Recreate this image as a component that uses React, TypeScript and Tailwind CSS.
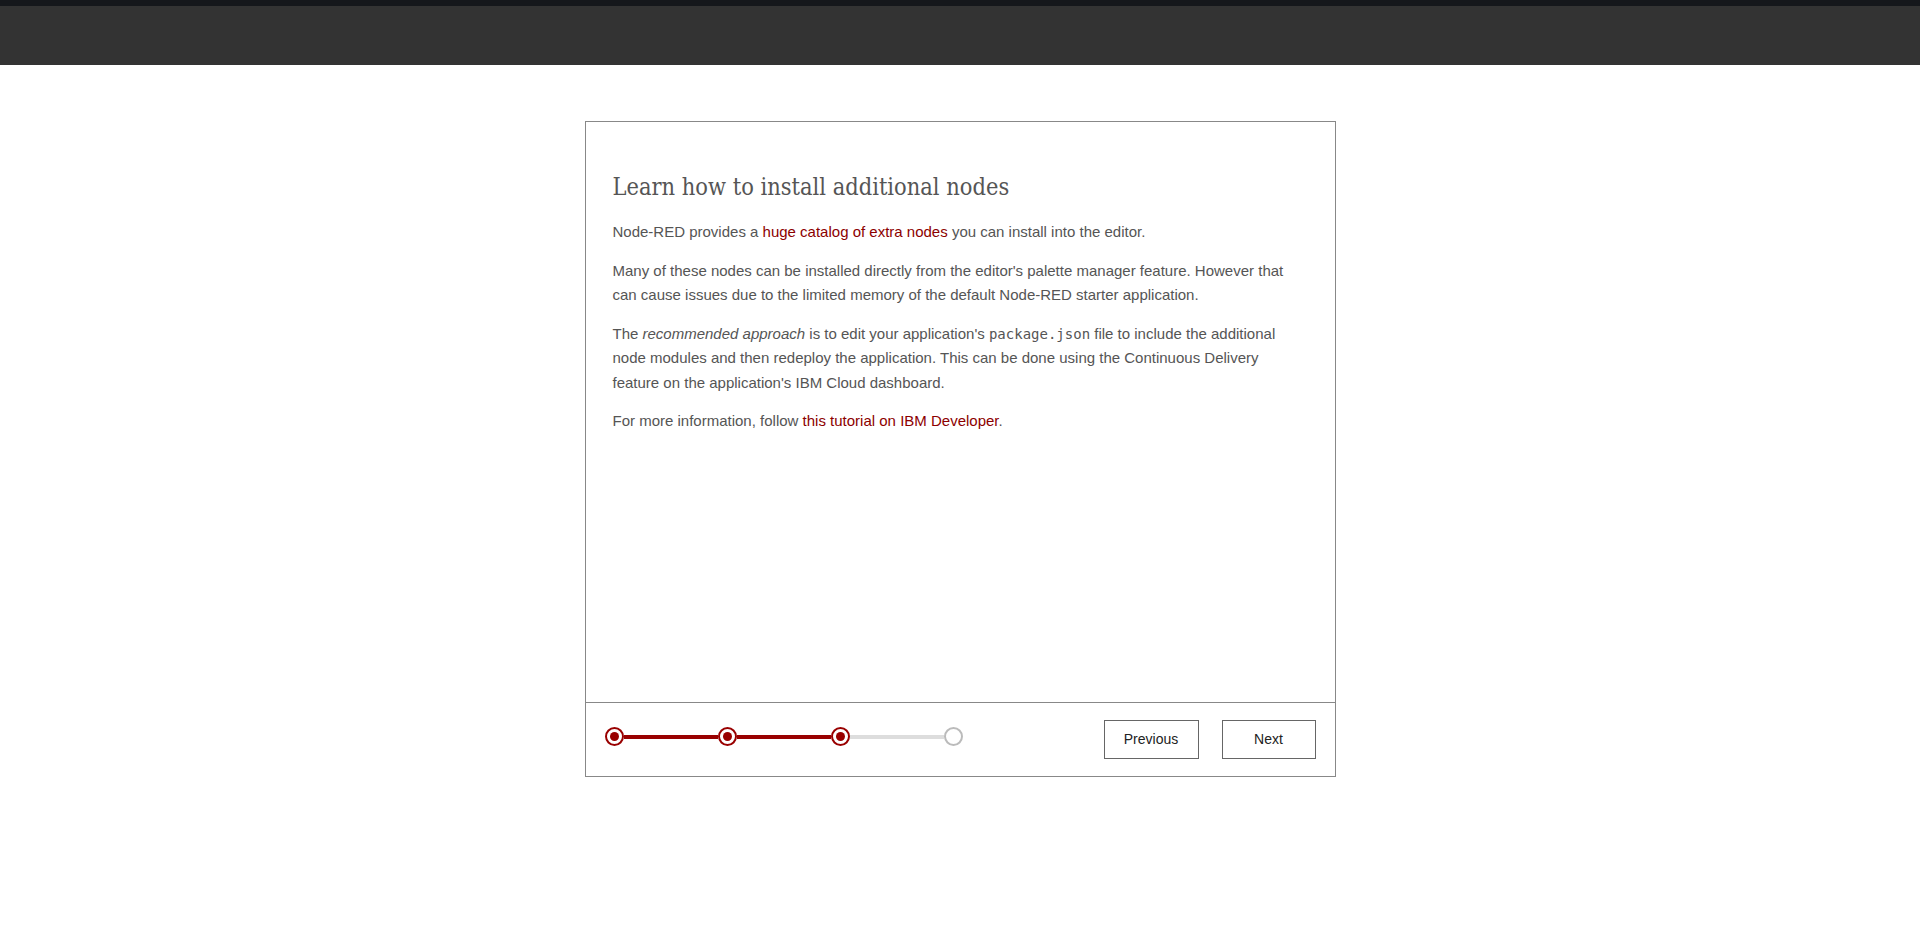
import React from "react";

const steps = [true, true, true, false];

function Stepper() {
  return (
    <div className="flex items-center">
      {steps.map((done, i) => (
        <React.Fragment key={i}>
          {i > 0 && (
            <div className={`h-[4px] w-[94px] ${steps[i - 1] && done ? "bg-[#990000]" : "bg-[#dddddd]"}`} />
          )}
          {done ? (
            <div className="flex h-[19px] w-[19px] items-center justify-center rounded-full border-[2px] border-[#990000] bg-white">
              <div className="h-[9px] w-[9px] rounded-full bg-[#990000]" />
            </div>
          ) : (
            <div className="h-[19px] w-[19px] rounded-full border-[2px] border-[#bbbbbb] bg-white" />
          )}
        </React.Fragment>
      ))}
    </div>
  );
}

export default function App() {
  const link = "text-[#8c0000] no-underline";
  return (
    <div className="min-h-screen bg-white font-['Liberation_Sans',Arial,sans-serif]">
      <div className="h-[6px] bg-[#15171b]" />
      <div className="h-[59px] bg-[#333333]" />

      <div className="mx-auto mt-[56px] w-[751px] border border-[#888888] bg-white">
        <div className="h-[580px] px-[27px] pt-[49px] text-[15px] leading-[24.5px] text-[#555555]">
          <h2 className="mb-[17px] font-['DejaVu_Serif_Condensed','DejaVu_Serif',serif] text-[23.4px] leading-[32px] font-normal text-[#555555]">
            Learn how to install additional nodes
          </h2>
          <p className="mb-[14px]">
            Node-RED provides a <a href="#" className={link}>huge catalog of extra nodes</a> you can install into the editor.
          </p>
          <p className="mb-[14px]">
            Many of these nodes can be installed directly from the editor's palette manager feature. However that can cause issues due to the limited memory of the default Node-RED starter application.
          </p>
          <p className="mb-[14px]">
            The <em>recommended approach</em> is to edit your application's{" "}
            <code className="font-['DejaVu_Sans_Mono',monospace] text-[14px] leading-none">package.json</code> file to include the additional node modules and then redeploy the application. This can be done using the Continuous Delivery feature on the application's IBM Cloud dashboard.
          </p>
          <p>
            For more information, follow <a href="#" className={link}>this tutorial on IBM Developer</a>.
          </p>
        </div>

        <div className="flex h-[74px] items-start justify-between border-t border-[#888888] pl-[19px] pr-[19px]">
          <div className="pt-[24px]">
            <Stepper />
          </div>
          <div className="flex gap-[23px] pt-[17px]">
            <button className="h-[39px] w-[95px] border border-[#666666] bg-white text-[14px] text-[#222222]">
              Previous
            </button>
            <button className="h-[39px] w-[94px] border border-[#666666] bg-white text-[14px] text-[#222222]">
              Next
            </button>
          </div>
        </div>
      </div>
    </div>
  );
}
